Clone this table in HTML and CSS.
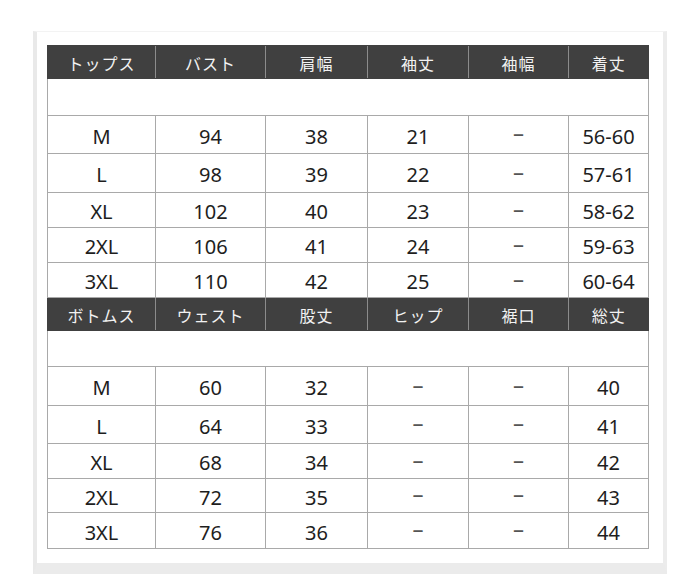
FILE: index.html
```html
<!DOCTYPE html>
<html lang="ja">
<head>
<meta charset="utf-8">
<link rel="stylesheet" href="styles.css">
</head>
<body>
<div class="card">
  <table class="size">
    <colgroup>
      <col class="c1"><col class="c2"><col class="c3"><col class="c4"><col class="c5"><col class="c6">
    </colgroup>
    <tr class="head h33"><th>トップス</th><th>バスト</th><th>肩幅</th><th>袖丈</th><th>袖幅</th><th>着丈</th></tr>
    <tr class="blank h37"><td colspan="6"></td></tr>
    <tr class="h38"><td>M</td><td>94</td><td>38</td><td>21</td><td><span class="dash">–</span></td><td>56-60</td></tr>
    <tr class="h39"><td>L</td><td>98</td><td>39</td><td>22</td><td><span class="dash">–</span></td><td>57-61</td></tr>
    <tr class="h35"><td>XL</td><td>102</td><td>40</td><td>23</td><td><span class="dash">–</span></td><td>58-62</td></tr>
    <tr class="h35"><td>2XL</td><td>106</td><td>41</td><td>24</td><td><span class="dash">–</span></td><td>59-63</td></tr>
    <tr class="h35"><td>3XL</td><td>110</td><td>42</td><td>25</td><td><span class="dash">–</span></td><td>60-64</td></tr>
    <tr class="head h33"><th>ボトムス</th><th>ウェスト</th><th>股丈</th><th>ヒップ</th><th>裾口</th><th>総丈</th></tr>
    <tr class="blank h36"><td colspan="6"></td></tr>
    <tr class="h39"><td>M</td><td>60</td><td>32</td><td><span class="dash">–</span></td><td><span class="dash">–</span></td><td>40</td></tr>
    <tr class="h38"><td>L</td><td>64</td><td>33</td><td><span class="dash">–</span></td><td><span class="dash">–</span></td><td>41</td></tr>
    <tr class="h35"><td>XL</td><td>68</td><td>34</td><td><span class="dash">–</span></td><td><span class="dash">–</span></td><td>42</td></tr>
    <tr class="h34"><td>2XL</td><td>72</td><td>35</td><td><span class="dash">–</span></td><td><span class="dash">–</span></td><td>43</td></tr>
    <tr class="h36"><td>3XL</td><td>76</td><td>36</td><td><span class="dash">–</span></td><td><span class="dash">–</span></td><td>44</td></tr>
  </table>
</div>
</body>
</html>
```

FILE: styles.css
```css
html, body {
  margin: 0;
  padding: 0;
  background: #ffffff;
}
body {
  font-family: "Noto Sans", "Noto Sans CJK JP", sans-serif;
  color: #1e1e1e;
}
.card {
  margin: 31px 0 0 33px;
  width: 616px;
  border-top: 1px solid #f3f3f3;
  border-left: 4px solid #e9e9e9;
  border-right: 4px solid #ececec;
  border-bottom: 11px solid #ebebeb;
  padding: 13px 0 14px 10px;
  background: #fff;
}
.size {
  border-collapse: collapse;
  table-layout: fixed;
  width: 601px;
}
.c1 { width: 108px; }
.c2 { width: 110px; }
.c3 { width: 102px; }
.c4 { width: 101px; }
.c5 { width: 100px; }
.c6 { width: 80px; }
.size th, .size td {
  padding: 0;
  text-align: center;
  vertical-align: middle;
}
.size td {
  border: 1px solid #a9a9a9;
  font-size: 20px;
  padding-top: 4px;
  line-height: 1;
}
.head th {
  background: #404040;
  color: #f2f2f2;
  font-family: "Noto Sans CJK JP", sans-serif;
  font-weight: 400;
  font-size: 16px;
  letter-spacing: 1px;
  border-left: 1px solid #8c8c8c;
  border-top: 1px solid #404040;
  border-bottom: 1px solid #404040;
  padding-top: 2px;
  line-height: 1;
}
.head th:first-child { border-left: 1px solid #404040; }
.blank td { padding: 0; }
.dash {
  color: #555;
  position: relative;
  top: -4px;
  font-size: 22px;
}
.h33 { height: 33px; }
.h34 { height: 34px; }
.h35 { height: 35px; }
.h36 { height: 36px; }
.h37 { height: 37px; }
.h38 { height: 38px; }
.h39 { height: 39px; }
```
